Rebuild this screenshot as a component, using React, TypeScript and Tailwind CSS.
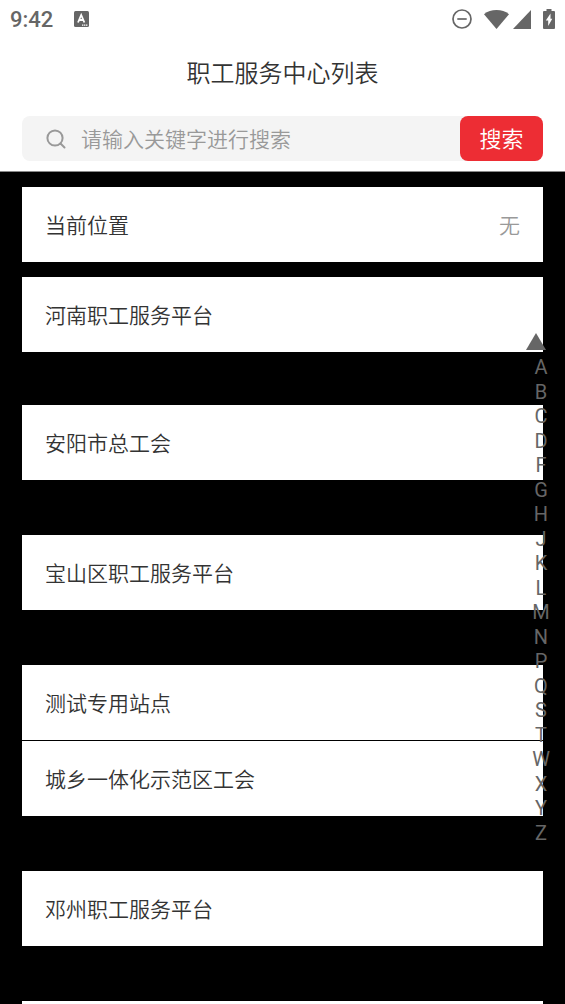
import React, { useState } from "react";

interface Station {
  name: string;
}

interface StationGroup {
  letter: string;
  stations: Station[];
}

const groups: StationGroup[] = [
  { letter: "A", stations: [{ name: "安阳市总工会" }] },
  { letter: "B", stations: [{ name: "宝山区职工服务平台" }] },
  {
    letter: "C",
    stations: [{ name: "测试专用站点" }, { name: "城乡一体化示范区工会" }],
  },
  { letter: "D", stations: [{ name: "邓州职工服务平台" }] },
  { letter: "F", stations: [{ name: "" }] },
];

const letters = "ABCDFGHJKLMNPQSTWXYZ".split("");

const StatusBar = () => (
  <div className="flex h-[38px] items-center justify-between px-[10px] text-[#666]">
    <div className="flex items-center gap-[21px]">
      <span className="pt-[2px] text-[22px] leading-9 font-medium">9:42</span>
      <svg width="15" height="16" viewBox="0 0 15 16" aria-hidden="true">
        <rect width="15" height="16" rx="1.5" fill="currentColor" />
        <path
          d="M4 11.5 7.2 4 10.4 11.5M5.2 9h4"
          fill="none"
          stroke="#fff"
          strokeWidth="1.8"
        />
        <path d="M8 13.5h1.4v1.2H8zM10 13.5h1.4v1.2H10zM12 13.5h1.4v1.2H12z" fill="#fff" />
      </svg>
    </div>
    <div className="flex items-center">
      <svg width="20" height="20" viewBox="0 0 20 20" fill="none" stroke="currentColor" strokeWidth="1.7" aria-hidden="true">
        <circle cx="10" cy="10" r="9" />
        <path d="M5.3 10h9.4" />
      </svg>
      <svg className="ml-3" width="25" height="19" viewBox="0 0 25 19" fill="currentColor" aria-hidden="true">
        <path d="M0 4.2C3.4 1.4 7.7 0 12.5 0S21.6 1.4 25 4.2L12.5 19z" />
      </svg>
      <svg className="ml-1" width="18" height="19" viewBox="0 0 18 19" fill="currentColor" aria-hidden="true">
        <path d="M18 0v19H0z" />
      </svg>
      <svg className="ml-3" width="12" height="20" viewBox="0 0 12 20" aria-hidden="true">
        <path
          d="M3.5 0h5v2H11a1 1 0 0 1 1 1v16a1 1 0 0 1-1 1H1a1 1 0 0 1-1-1V3a1 1 0 0 1 1-1h2.5z"
          fill="currentColor"
        />
        <path d="M7.5 4.5 2.8 11.5h2.400v5.500L9.300 9.700H7.500z" fill="#fff" />
      </svg>
    </div>
  </div>
);

const SearchBar = () => {
  const [keyword, setKeyword] = useState("");

  return (
    <form
      className="mx-[22px] mt-[22px] flex h-[45px] rounded-lg bg-[#f4f4f4]"
      onSubmit={(e) => e.preventDefault()}
    >
      <label htmlFor="keyword" className="flex w-[59px] items-center pl-6">
        <svg
          width="20"
          height="20"
          viewBox="0 0 20 20"
          fill="none"
          stroke="#999"
          strokeWidth="2"
          strokeLinecap="round"
          role="img"
          aria-label="搜索关键字"
        >
          <circle cx="9" cy="9" r="7.6" />
          <path d="m14.5 14.5 4 4" />
        </svg>
      </label>
      <input
        id="keyword"
        type="text"
        value={keyword}
        onChange={(e) => setKeyword(e.target.value)}
        placeholder="请输入关键字进行搜索"
        className="min-w-0 flex-1 bg-transparent pt-1 text-[21px] font-[350] text-[#333] outline-none placeholder:text-[#999]"
      />
      <button type="submit" className="w-[83px] rounded-lg bg-[#ed2d34] pt-px text-[22px] font-[350] text-white">
        搜索
      </button>
    </form>
  );
};

const StationRow = ({ name, value }: { name: string; value?: string }) => (
  <button
    type="button"
    className="flex h-[75px] w-full shrink-0 items-center justify-between bg-white px-[23px] pt-1 text-left text-[21px] font-[350] text-[#333]"
  >
    <span>{name}</span>
    {value && <span className="text-[#999]">{value}</span>}
  </button>
);

const LetterIndex = () => (
  <nav
    aria-label="字母索引"
    className="absolute inset-y-0 right-[13px] flex w-[22px] flex-col items-center justify-center text-[20px] text-[#666]"
  >
    <a href="#top" aria-label="返回顶部" className="flex h-6 w-full items-start justify-start pt-[2px]">
      <svg className="-ml-1 shrink-0" width="20" height="17" viewBox="0 0 20 17" fill="currentColor" aria-hidden="true">
        <path d="M10 0l10 17H0z" />
      </svg>
    </a>
    <div className="flex h-[490px] flex-col">
      {letters.map((letter) => (
        <a
          key={letter}
          href={`#${letter}`}
          className="flex min-h-0 flex-1 items-center justify-center leading-6"
        >
          {letter}
        </a>
      ))}
    </div>
  </nav>
);

const App = () => {
  return (
    <div className="flex h-screen flex-col bg-black font-[Roboto,'Noto_Sans_CJK_SC',sans-serif]">
      <header className="shrink-0 border-b border-[#888] bg-white pb-[10px]">
        <StatusBar />
        <h1 className="mt-4 text-center text-[24px] leading-10 font-[350] text-[#333]">
          职工服务中心列表
        </h1>
        <SearchBar />
      </header>
      <div className="relative min-h-0 flex-1">
        <main
          id="top"
          className="h-full overflow-y-auto px-[22px] pt-[15px] [scrollbar-width:none]"
        >
          <div className="mb-[53px] flex flex-col gap-[15px]">
            <StationRow name="当前位置" value="无" />
            <StationRow name="河南职工服务平台" />
          </div>
          <div className="flex flex-col gap-[55px]">
            {groups.map(({ letter, stations }) => (
              <section key={letter} id={letter} className="flex flex-col gap-px">
                {stations.map(({ name }) => (
                  <StationRow key={name} name={name} />
                ))}
              </section>
            ))}
          </div>
        </main>
        <LetterIndex />
      </div>
    </div>
  );
};

export default App;
